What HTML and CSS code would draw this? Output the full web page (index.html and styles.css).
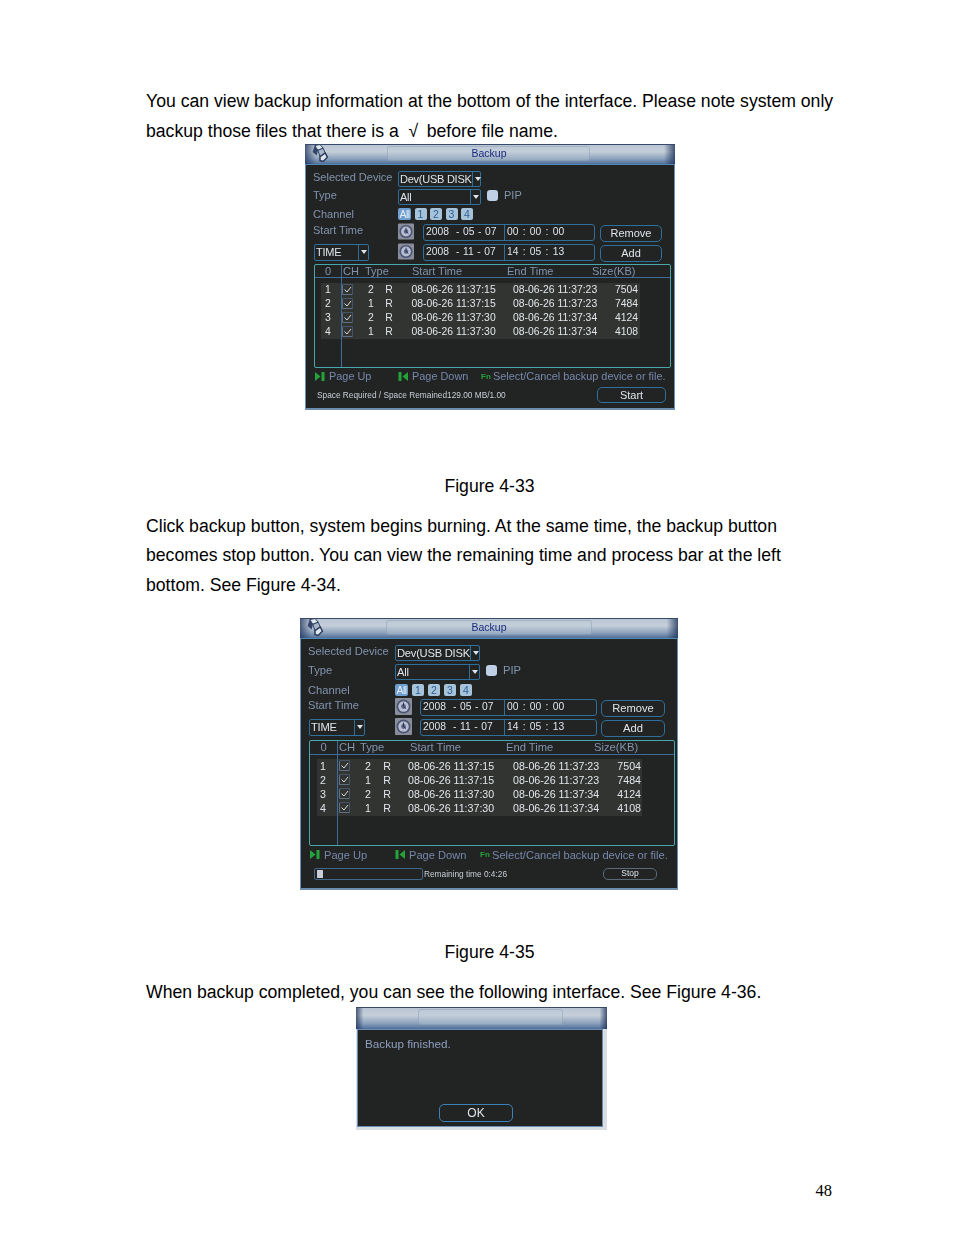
FILE: index.html
```html
<!DOCTYPE html>
<html lang="en">
<head>
<meta charset="utf-8">
<title>Backup</title>
<link rel="stylesheet" href="styles.css">
</head>
<body>
<main class="page">
  <svg class="defs" width="0" height="0" aria-hidden="true">
    <defs>
      <symbol id="logo" viewBox="0 0 20 18">
        <path d="M5 1.500l5-1 3 3.500-5 2z" fill="#dfe7ee" stroke="#2a3a5c" stroke-width=".9"/>
        <path d="M5 1.500l3 4.500-1 5-4-3.500z" fill="#33456a"/>
        <path d="M8 6l5-2 2 4.500-5 3.500z" fill="#a8b6c8" stroke="#2a3a5c" stroke-width=".9"/>
        <path d="M10 12l5-3.500 2 4-4 4-3-1z" fill="#dfe6ee" stroke="#2a3a5c" stroke-width="1.400"/>
      </symbol>
      <symbol id="clock" viewBox="0 0 17 17">
        <rect width="17" height="17" rx="1" fill="#8a8d9c"/>
        <circle cx="8.500" cy="8.500" r="7" fill="#4d5674"/>
        <circle cx="8.500" cy="8.500" r="5.200" fill="#b9bfd2"/>
        <circle cx="8.500" cy="8.500" r="2.400" fill="#5c6486"/>
        <path d="M8.500 4.500v4l2.500 2" fill="none" stroke="#2a3354" stroke-width="1"/>
      </symbol>
      <symbol id="next" viewBox="0 0 11 9">
        <path d="M0 0l5.500 4.500-5.500 4.500z M6.500 0h3v9h-3z" fill="#25a33a"/>
      </symbol>
      <symbol id="prev" viewBox="0 0 11 9">
        <path d="M10 0l-5.500 4.500 5.500 4.500z M.5 0h3v9h-3z" fill="#25a33a"/>
      </symbol>
      <symbol id="tick" viewBox="0 0 11 11">
        <path d="M.5 1v9.500h10" fill="none" stroke="#5f6f86"/>
        <path d="M.5.5h10v10" fill="none" stroke="#46546a"/>
        <path d="M2.500 5.500l2.500 2.500 4-5" fill="none" stroke="#d5dbe2"/>
      </symbol>
    </defs>
  </svg>

  <p class="text intro">You can view backup information at the bottom of the interface. Please note system only<br>backup those files that there is a &nbsp;√&thinsp; before file name.</p>

  <section class="dvr fig-a">
    <header class="titlebar"><svg class="logo"><use href="#logo"/></svg><div class="title">Backup</div></header>
    <div class="panel">
      <div class="form">
        <div class="row"><span class="label">Selected Device</span><div class="select sel-dev"><span class="val">Dev(USB DISK</span><span class="arrow"></span></div></div>
        <div class="row"><span class="label">Type</span><div class="select sel-type"><span class="val">All</span><span class="arrow"></span></div><span class="check"></span><span class="pip">PIP</span></div>
        <div class="row"><span class="label">Channel</span><div class="chans"><span class="chan">All</span><span class="chan">1</span><span class="chan">2</span><span class="chan">3</span><span class="chan">4</span></div></div>
        <div class="row"><span class="label">Start Time</span><svg class="clock"><use href="#clock"/></svg><div class="datebox"><span class="date">2008 &nbsp;- 05 - 07</span><span class="time">00 : 00 : 00</span></div><button class="btn act">Remove</button></div>
        <div class="row"><div class="label-cell"><div class="select sel-time"><span class="val">TIME</span><span class="arrow"></span></div></div><svg class="clock"><use href="#clock"/></svg><div class="datebox"><span class="date">2008 &nbsp;- 11 - 07</span><span class="time">14 : 05 : 13</span></div><button class="btn act">Add</button></div>
      </div>
      <div class="table">
        <div class="thead"><span class="h-no">0</span><span class="h-ch">CH</span><span class="h-type">Type</span><span class="h-start">Start Time</span><span class="h-end">End Time</span><span class="h-size">Size(KB)</span></div>
        <div class="rows">
          <span class="no">1</span><svg class="tick"><use href="#tick"/></svg><span class="ch">2</span><span class="r">R</span><span class="d1">08-06-26 11:37:15</span><span class="d2">08-06-26 11:37:23</span><span class="sz">7504</span>
          <span class="no">2</span><svg class="tick"><use href="#tick"/></svg><span class="ch">1</span><span class="r">R</span><span class="d1">08-06-26 11:37:15</span><span class="d2">08-06-26 11:37:23</span><span class="sz">7484</span>
          <span class="no">3</span><svg class="tick"><use href="#tick"/></svg><span class="ch">2</span><span class="r">R</span><span class="d1">08-06-26 11:37:30</span><span class="d2">08-06-26 11:37:34</span><span class="sz">4124</span>
          <span class="no">4</span><svg class="tick"><use href="#tick"/></svg><span class="ch">1</span><span class="r">R</span><span class="d1">08-06-26 11:37:30</span><span class="d2">08-06-26 11:37:34</span><span class="sz">4108</span>
        </div>
      </div>
      <div class="hints"><svg class="hk"><use href="#next"/></svg><span class="h-up">Page Up</span><svg class="hk"><use href="#prev"/></svg><span class="h-down">Page Down</span><span class="fn">Fn</span><span>Select/Cancel backup device or file.</span></div>
      <div class="status"><span class="space">Space Required / Space Remained129.00 MB/1.00</span><button class="btn start">Start</button></div>
    </div>
  </section>

  <p class="text caption cap-a">Figure 4-33</p>

  <p class="text follow">Click backup button, system begins burning. At the same time, the backup button<br>becomes stop button. You can view the remaining time and process bar at the left<br>bottom. See Figure 4-34.</p>

  <section class="dvr fig-b">
    <header class="titlebar"><svg class="logo"><use href="#logo"/></svg><div class="title">Backup</div></header>
    <div class="panel">
      <div class="form">
        <div class="row"><span class="label">Selected Device</span><div class="select sel-dev"><span class="val">Dev(USB DISK</span><span class="arrow"></span></div></div>
        <div class="row"><span class="label">Type</span><div class="select sel-type"><span class="val">All</span><span class="arrow"></span></div><span class="check"></span><span class="pip">PIP</span></div>
        <div class="row"><span class="label">Channel</span><div class="chans"><span class="chan">All</span><span class="chan">1</span><span class="chan">2</span><span class="chan">3</span><span class="chan">4</span></div></div>
        <div class="row"><span class="label">Start Time</span><svg class="clock"><use href="#clock"/></svg><div class="datebox"><span class="date">2008 &nbsp;- 05 - 07</span><span class="time">00 : 00 : 00</span></div><button class="btn act">Remove</button></div>
        <div class="row"><div class="label-cell"><div class="select sel-time"><span class="val">TIME</span><span class="arrow"></span></div></div><svg class="clock"><use href="#clock"/></svg><div class="datebox"><span class="date">2008 &nbsp;- 11 - 07</span><span class="time">14 : 05 : 13</span></div><button class="btn act">Add</button></div>
      </div>
      <div class="table">
        <div class="thead"><span class="h-no">0</span><span class="h-ch">CH</span><span class="h-type">Type</span><span class="h-start">Start Time</span><span class="h-end">End Time</span><span class="h-size">Size(KB)</span></div>
        <div class="rows">
          <span class="no">1</span><svg class="tick"><use href="#tick"/></svg><span class="ch">2</span><span class="r">R</span><span class="d1">08-06-26 11:37:15</span><span class="d2">08-06-26 11:37:23</span><span class="sz">7504</span>
          <span class="no">2</span><svg class="tick"><use href="#tick"/></svg><span class="ch">1</span><span class="r">R</span><span class="d1">08-06-26 11:37:15</span><span class="d2">08-06-26 11:37:23</span><span class="sz">7484</span>
          <span class="no">3</span><svg class="tick"><use href="#tick"/></svg><span class="ch">2</span><span class="r">R</span><span class="d1">08-06-26 11:37:30</span><span class="d2">08-06-26 11:37:34</span><span class="sz">4124</span>
          <span class="no">4</span><svg class="tick"><use href="#tick"/></svg><span class="ch">1</span><span class="r">R</span><span class="d1">08-06-26 11:37:30</span><span class="d2">08-06-26 11:37:34</span><span class="sz">4108</span>
        </div>
      </div>
      <div class="hints"><svg class="hk"><use href="#next"/></svg><span class="h-up">Page Up</span><svg class="hk"><use href="#prev"/></svg><span class="h-down">Page Down</span><span class="fn">Fn</span><span>Select/Cancel backup device or file.</span></div>
      <div class="status"><div class="progress"><div class="fill"></div></div><span class="space">Remaining time 0:4:26</span><button class="btn stop">Stop</button></div>
    </div>
  </section>

  <p class="text caption cap-b">Figure 4-35</p>

  <p class="text follow">When backup completed, you can see the following interface. See Figure 4-36.</p>

  <section class="dvr dialog">
    <header class="titlebar"><div class="title"></div></header>
    <div class="panel">
      <p class="msg">Backup finished.</p>
      <button class="btn ok">OK</button>
    </div>
  </section>

  <footer class="pageno">48</footer>
</main>
</body>
</html>
```

FILE: styles.css
```css
* { box-sizing: border-box; }
html, body { margin: 0; padding: 0; background: #fff; }
.page {
  width: 954px;
  height: 1235px;
  padding: 87px 0 0 146px;
  overflow: hidden;
  font-family: "Liberation Sans", Arial, sans-serif;
}
.defs { position: absolute; }
.text {
  margin: 0;
  width: 720px;
  font-size: 17.640px;
  line-height: 29.7px;
  color: #000;
  white-space: nowrap;
}
.intro { height: 57px; }
.caption { width: 687px; text-align: center; }
.cap-a { margin-top: 62px; }
.cap-b { margin-top: 48px; }
.follow { margin-top: 10px; }

/* Device screen shots */
.dvr {
  --lab: 85px;
  font-size: 11px;
  color: #8293ae;
  filter: blur(.35px);
  background: #222423;
}
.fig-a {
  width: 370px;
  height: 266px;
  margin-left: 159px;
  --tracks: 18px 19px 16px 20px 20px;
  --dev: 83px;
  --clockw: 16px;
  --clockgap: 9px;
  --boxw: 172px;
  --datew: 81px;
  --btnw: 62px;
  --btngap: 5px;
  --selt: 55px;
  --chan-gap: 3.500px;
  --tabh: 104px;
  --tabl: 8px;
  --tabw: 357px;
  --headh: 13px;
  --noh: 26px;
  font-size: 11px;
}
.fig-b {
  width: 378px;
  height: 272px;
  margin: 17px 0 0 154px;
  --tracks: 19px 20px 15px 20px 21px;
  --dev: 85px;
  --clockw: 17px;
  --clockgap: 8px;
  --boxw: 177px;
  --datew: 84px;
  --btnw: 64px;
  --btngap: 4px;
  --selt: 56px;
  --chan-gap: 4px;
  --tabh: 106px;
  --tabl: 8px;
  --tabw: 366px;
  --headh: 14px;
  --noh: 27px;
  --lab: 87px;
  font-size: 11.200px;
}

.titlebar {
  height: 20px;
  display: flex;
  align-items: flex-start;
  position: relative;
  border-top: 1px solid #39496a;
  background:
    linear-gradient(90deg, rgba(30,50,90,.75) 0, rgba(30,50,90,0) 3%, rgba(30,50,90,0) 97%, rgba(30,50,90,.8) 100%),
    linear-gradient(180deg, #b9c5d3 0, #c5cfda 35%, #8da2bc 72%, #4f6f99 100%);
}
.logo { position: absolute; left: 3px; top: -1px; width: 24px; height: 19px; }
.title {
  margin: 1px auto 0;
  height: 15px;
  width: 203px;
  text-align: center;
  line-height: 13px;
  font-size: 10.500px;
  color: #1b2a80;
  background: rgba(190,202,216,.35);
  border: 1px solid rgba(120,140,165,.35);
  border-radius: 3px;
}
.fig-a .title { margin-left: 82px; padding-left: 1px; }
.fig-b .title { margin-left: 86px; width: 206px; }

.panel {
  height: calc(100% - 20px);
  border: 1px solid #6d8eb0;
  border-top-color: #5288b5;
  border-bottom-width: 2px;
  display: flex;
  flex-direction: column;
  background: #222423;
}
.form {
  display: grid;
  grid-template-rows: var(--tracks);
  padding: 6px 0 0 7px;
  height: 99px;
}
.fig-b .form { height: 101px; }
.row { display: flex; align-items: flex-start; min-width: 0; }
.label { width: var(--lab); line-height: 13px; white-space: nowrap; flex: none; }
.label-cell { width: var(--lab); flex: none; padding-left: 1px; }
.select {
  display: flex;
  height: 16px;
  border: 1px solid #2f6f9c;
  border-radius: 2px;
  color: #dfe4ea;
  line-height: 14px;
  padding-left: 1px;
}
.val { flex: 1; white-space: nowrap; letter-spacing: -.25px; }
.arrow { width: 10px; border-left: 1px solid #2f6f9c; position: relative; flex: none; }
.arrow::after {
  content: "";
  position: absolute;
  top: 5px;
  left: 2px;
  border: 3px solid transparent;
  border-top: 4px solid #dfe4ea;
  border-bottom: 0;
}
.sel-dev, .sel-type { width: var(--dev); }
.sel-time { width: var(--selt); height: 17px; }
.check {
  width: 11px;
  height: 11px;
  margin: 1px 0 0 6px;
  border-radius: 3px;
  background: #bfd0e6;
  flex: none;
}
.pip { margin-left: 6px; line-height: 13px; }
.chans { display: flex; gap: var(--chan-gap); }
.chan {
  width: 12px;
  height: 12px;
  line-height: 12px;
  font-size: 10.500px;
  text-align: center;
  color: #2c5f96;
  background: #a6c3da;
  border-radius: 2px;
}
.chan:first-child { width: 13px; background: #6f9fd0; color: #e6eef6; letter-spacing: -.5px; }
.clock { width: var(--clockw); height: 17px; margin: -1px var(--clockgap) 0 0; flex: none; }
.datebox {
  display: flex;
  width: var(--boxw);
  height: 17px;
  line-height: 14px;
  border: 1px solid #2f6f9c;
  border-radius: 3px;
  color: #dfe4ea;
  flex: none;
  font-size: 10.300px;
  word-spacing: 1.400px;
}
.date { width: var(--datew); padding-left: 2px; border-right: 1px solid #2f6f9c; white-space: nowrap; flex: none; word-spacing: .7px; }
.time { padding-left: 2px; white-space: nowrap; }
.btn {
  font: inherit;
  color: #dfe4ea;
  padding: 0;
  background: #222423;
  border: 1.500px solid #2f6f9c;
  border-radius: 5px;
  text-align: center;
  line-height: 13px;
}
.act { width: var(--btnw); height: 17px; margin: 1px 0 0 var(--btngap); flex: none; }

.table {
  position: relative;
  margin-left: var(--tabl);
  width: var(--tabw);
  height: var(--tabh);
  border: 1px solid #48a6ad;
  border-radius: 2px;
  flex: none;
}
.table::before {
  content: "";
  position: absolute;
  top: 0;
  bottom: 0;
  left: var(--noh);
  width: 1px;
  background: #3e6b99;
}
.thead {
  height: var(--headh);
  border-bottom: 1px solid #3e6b99;
  display: flex;
  line-height: 12px;
  white-space: nowrap;
}
.h-no { text-align: center; flex: none; }
.rows {
  display: grid;
  grid-auto-rows: 14px;
  align-items: center;
  background: #323432;
  color: #e2e6ea;
  line-height: 14px;
  white-space: nowrap;
}
.fig-a .thead span:nth-child(1) { width: 26px; }
.fig-a .thead span:nth-child(2) { margin-left: 2px; width: 22px; }
.fig-a .thead span:nth-child(3) { width: 47px; }
.fig-a .thead span:nth-child(4) { width: 95px; }
.fig-a .thead span:nth-child(5) { width: 85px; }
.fig-b .thead span:nth-child(1) { width: 27px; }
.fig-b .thead span:nth-child(2) { margin-left: 2px; width: 21px; }
.fig-b .thead span:nth-child(3) { width: 50px; }
.fig-b .thead span:nth-child(4) { width: 96px; }
.fig-b .thead span:nth-child(5) { width: 88px; }

.fig-a .rows {
  width: 319px;
  margin: 5px 0 0 6px;
  grid-template-columns: 14px 30px 12px 24px 100px 105px 32px;
  font-size: 10.400px;
  height: 56px;
}
.fig-b .rows {
  width: 325px;
  margin: 4px 0 0 7px;
  grid-template-columns: 12px 32px 14px 24px 104px 110px 28px;
  font-size: 10.650px;
  height: 57px;
}
.no, .ch, .r { text-align: center; }
.tick { width: 11px; height: 11px; display: block; margin-top: -1px; }
.fig-a .tick { margin-left: 7px; }
.fig-b .tick { margin-left: 10px; }
.fig-a .d1 { padding-left: 10.500px; }
.fig-a .d2 { padding-left: 12px; }
.fig-b .d1 { padding-left: 9px; }
.fig-b .d2 { padding-left: 10px; }
.sz { text-align: right; }

.hints {
  display: flex;
  align-items: center;
  height: 16px;
  padding-left: 9px;
  white-space: nowrap;
  color: #7788ac;
  flex: none;
  font-size: 10.900px;
}
.fig-b .hints { height: 18px; padding-left: 9px; font-size: 11.100px; }
.hk { width: 11px; height: 9px; margin-right: 3px; flex: none; }
.h-up { width: 69px; }
.h-down { width: 69px; }
.fig-b .h-up { width: 71px; }
.fig-b .h-down { width: 71px; }
.fn { color: #25a33a; font-size: 8px; font-weight: bold; width: 12px; }

.status { display: flex; align-items: center; flex: 1; padding-left: 11px; color: #c9ced6; }
.space { font-size: 8.300px; white-space: nowrap; }
.start { width: 69px; height: 16px; margin: 0 8px 4px auto; }
.fig-a .status { padding-top: 2px; }
.fig-a .space { padding-bottom: 5px; }
.progress {
  width: 109px;
  height: 12px;
  border: 1px solid #41688c;
  border-radius: 2px;
  padding: 1px 0 1px 2px;
  margin: 0 1px 0 3px;
}
.fill { width: 6px; height: 100%; background: #c9ced6; }
.stop { width: 54px; height: 12px; font-size: 8.500px; line-height: 9px; margin-left: auto; margin-right: 20px; border-width: 1px; border-color: #5a6a78; }
.fig-b .status { padding-left: 10px; padding-bottom: 4px; }

/* Finished dialog */
.dialog {
  width: 251px;
  height: 123px;
  margin: 0 0 0 210px;
  background: #d9dee3;
}
.dialog .titlebar { height: 22px; }
.dialog .title { width: 145px; margin: 1px auto 0 62px; height: 16px; }
.dialog .panel {
  width: 246px;
  margin-left: 1px;
  height: 98px;
  border: 1.500px solid #6a8cb5;
  border-top-width: 1px;
  align-items: flex-start;
}
.msg { margin: 7px 0 0 7px; font-size: 11.700px; line-height: 14px; color: #8f9fc0; }
.ok {
  width: 74px;
  height: 18px;
  margin: 53px 0 0 81px;
  font-size: 12px;
  line-height: 14px;
  border-color: #3c82b8;
}

.pageno {
  width: 686px;
  margin-top: 51px;
  text-align: right;
  font: 16.500px/20px "Liberation Serif", "Times New Roman", serif;
  color: #000;
}
```
